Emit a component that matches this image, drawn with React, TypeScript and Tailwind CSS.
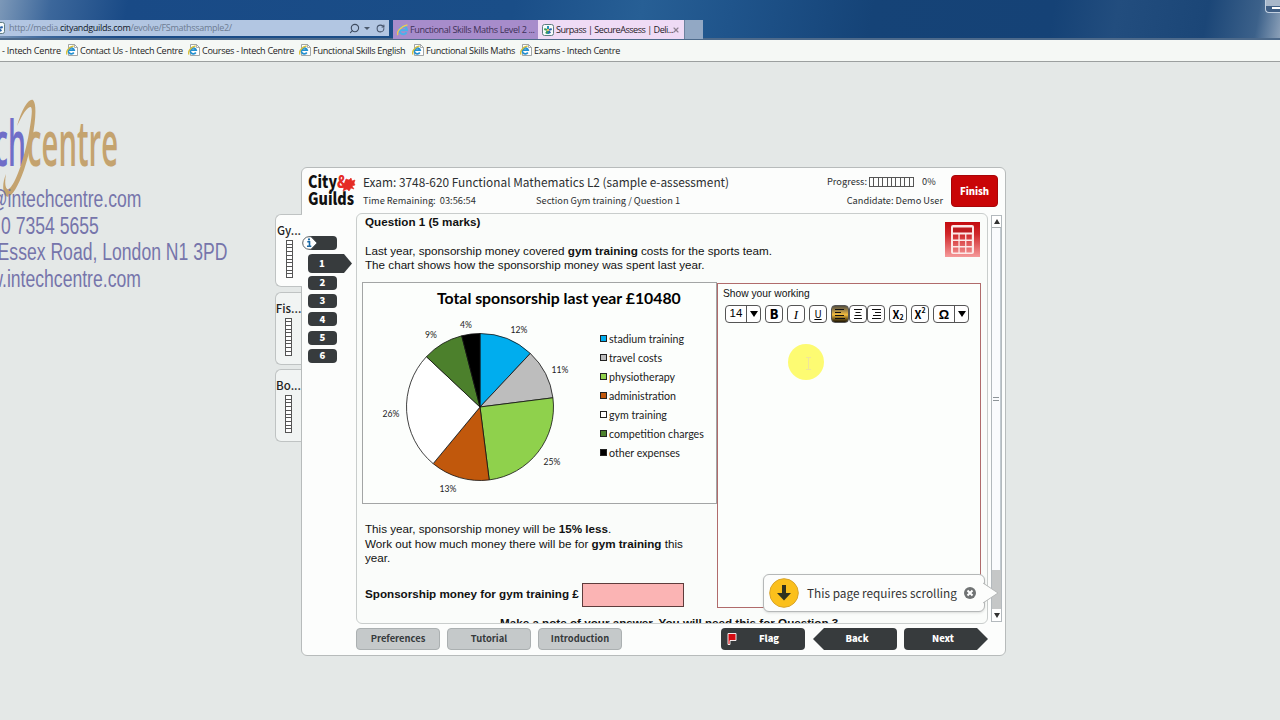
import type React from "react"
import { Search, RotateCw, X } from "lucide-react"

const UI = "font-['Noto_Sans_CJK_SC','Noto_Sans',sans-serif]"
const CHROME = "font-['Open_Sans','Noto_Sans',sans-serif]"
const BODY = "font-['Liberation_Sans',Arial,sans-serif]"
const CHART = "font-['Lato',sans-serif]"

const favourites = [
  { label: "Contact Us - Intech Centre", width: "w-[122px]" },
  { label: "Courses - Intech Centre", width: "w-[111px]" },
  { label: "Functional Skills English", width: "w-[113px]" },
  { label: "Functional Skills Maths", width: "w-[108px]" },
  { label: "Exams - Intech Centre", width: "w-[110px]" },
]

const slices = [
  { label: "stadium training", value: 12, color: "#00adee", x: 156, y: 50 },
  { label: "travel costs", value: 11, color: "#bdbdbd", x: 197, y: 90 },
  { label: "physiotherapy", value: 25, color: "#8fd14c", x: 189, y: 182 },
  { label: "administration", value: 13, color: "#c1580c", x: 85, y: 209 },
  { label: "gym training", value: 26, color: "#ffffff", x: 28, y: 134 },
  { label: "competition charges", value: 9, color: "#4c802c", x: 68, y: 55 },
  { label: "other expenses", value: 4, color: "#000000", x: 103, y: 45 },
]

const IePageIcon: React.FC = () => (
  <svg width="12" height="12" viewBox="0 0 12 12" className="shrink-0">
    <path d="M2.5.5h6l3 3v8h-9z" fill="#fff" stroke="#8a8f90" strokeWidth=".8" />
    <path d="M8.5.5v3h3" fill="none" stroke="#8a8f90" strokeWidth=".7" />
    <path d="M7.800 8.500a3 3 0 1 1 .4-2.300H2.800" fill="none" stroke="#2490d0" strokeWidth="1.700" />
    <path d="M1 10.500C-.5 8 2.500 2.800 7.600 2" fill="none" stroke="#d9c13c" strokeWidth="1.400" />
  </svg>
)

const SurpassIcon: React.FC = () => (
  <svg width="12" height="12" viewBox="0 0 12 12" className="shrink-0">
    <rect x=".5" y=".5" width="11" height="11" rx="2" fill="#f6fbfb" stroke="#5f7c80" />
    <path d="M6 2v3M6 7v3" stroke="#2793b5" strokeWidth="2" />
    <path d="M2.3 5l2.6.8M4 9.5l1.5-2.4" stroke="#3a9b54" strokeWidth="1.9" />
    <path d="M9.7 5l-2.6.8M8.2 9.3L6.9 7.2" stroke="#2a62a8" strokeWidth="1.9" />
    <circle cx="6" cy="6" r="1" fill="#e8b03a" />
  </svg>
)

const Browser: React.FC = () => (
  <header className={`${CHROME} shrink-0`}>
    <div className="flex h-10 items-start border-b-2 border-[#4d6a8b] bg-[linear-gradient(100deg,#7c98b8_0%,#3c679b_4%,#194a86_10%,#1a4e88_40%,#275f95_50%,#1f548b_57%,#154377_68%,#154276_82%,#224d7e_87%,#1b4677_94%,#3c618a_98%,#8ba0b8_100%)] pt-5">
      <div className="flex h-4 w-[389px] items-center bg-[#b2c6e2] pr-1">
        <div className="w-[5px] overflow-hidden">
          <div className="-ml-[7px]"><SurpassIcon /></div>
        </div>
        <span className="ml-1 whitespace-nowrap text-[9px] leading-4 tracking-[-0.3px] text-[#6d7c92]">
          http://media.<span className="text-[#10161f]">cityandguilds.com</span>/evolve/FSmathssample2/
        </span>
        <span className="grow" />
        <Search size={11} strokeWidth={2.4} className="-scale-x-100 text-[#3f4c60]" />
        <span className="ml-1 border-x-[3px] border-t-[3px] border-x-transparent border-t-[#4b596c]" />
        <RotateCw size={9} strokeWidth={2.8} className="ml-1.5 text-[#44536a]" />
      </div>
      <div className="ml-1 flex h-[19px] w-[145px] items-center bg-[#a78ccb] pl-1">
        <svg width="12" height="12" viewBox="0 0 12 12" className="shrink-0">
          <path d="M9.600 8.300a3.800 3.800 0 1 1 .5-2.100H3" fill="none" stroke="#4ab1ea" strokeWidth="2" />
          <path d="M1 11C-.8 8.500 3 2.500 10.500.9" fill="none" stroke="#ecc955" strokeWidth="1.400" />
        </svg>
        <span className="ml-px whitespace-nowrap text-[9.1px] tracking-[-0.37px] text-[#3d3057]">Functional Skills Maths Level 2 ...</span>
      </div>
      <div className="flex h-[19px] w-[146px] items-center bg-[#efdbf5] pl-1">
        <SurpassIcon />
        <span className="ml-[2px] w-[116px] whitespace-nowrap text-[9.1px] tracking-[-0.5px] text-[#262028]">Surpass | SecureAssess | Deli...</span>
        <X size={8} strokeWidth={3.5} className="shrink-0 text-[#8d8190]" />
      </div>
      <div className="h-[19px] w-[19px] border-l border-[#6d829e] bg-[#92a8c4]" />
      <span className="grow" />
      <div className="-mt-5 flex h-[13px] w-[15px] items-center justify-end rounded-bl border-b border-l border-[#c2d0e0] bg-linear-to-b from-[#a9b8ca] from-50% to-[#405f85] to-50%">
        <span className="mt-1 h-[2px] w-2 bg-white" />
      </div>
    </div>
    <nav className="flex h-[22px] items-center border-b border-[#9b9f9f] bg-[#f5f8f5] text-[9.1px] text-[#222]">
      <span className="w-[66px] whitespace-nowrap pl-[2px] tracking-[-0.25px]">- Intech Centre</span>
      {favourites.map((fav) => (
        <div key={fav.label} className={`flex items-center gap-[2px] ${fav.width}`}>
          <IePageIcon />
          <span className="whitespace-nowrap tracking-[-0.31px]">{fav.label}</span>
        </div>
      ))}
    </nav>
  </header>
)

const ContactDetails: React.FC = () => (
  <aside className="w-[275px] shrink-0 overflow-hidden pt-[36px]">
    <svg width="130" height="102" viewBox="0 0 130 102" className="block">
      <g fontFamily="'Open Sans', sans-serif" fontSize="64" fontWeight="600">
        <text x="-6" y="68" textLength="32" lengthAdjust="spacingAndGlyphs" fill="#706dc8">ch</text>
        <text x="27" y="68" textLength="91" lengthAdjust="spacingAndGlyphs" fill="#c4a36f">centre</text>
      </g>
      <path d="M17 28C22 10 29 0 33 2C39 8 33 45 24 72C17 92 9 103 5 97C2 92 3 83 6 76C4 87 6 94 10 90C17 83 25 57 29 35C32 18 33 8 30 9C25 11 21 20 17 28Z" fill="#c4a36f" />
    </svg>
    <div className={`${BODY} -mt-[14px] text-[23px] leading-[26.7px] text-[#7675ab]`}>
      <div className="flex w-[141px] justify-end"><span className="origin-right scale-x-[.765] whitespace-nowrap">@intechcentre.com</span></div>
      <div className="flex w-[99px] justify-end"><span className="origin-right scale-x-[.765] whitespace-nowrap">0 7354 5655</span></div>
      <div className="flex w-[227px] justify-end"><span className="origin-right scale-x-[.765] whitespace-nowrap">Essex Road, London N1 3PD</span></div>
      <div className="flex w-[141px] justify-end"><span className="origin-right scale-x-[.765] whitespace-nowrap">w.intechcentre.com</span></div>
    </div>
  </aside>
)

const SectionTab: React.FC<{ label: string; active?: boolean }> = ({ label, active }) => (
  <div className={`flex h-[73px] flex-col items-center rounded-l-md border border-r-0 border-[#bfc3c3] ${active ? "-mr-px bg-[#fcfdfc]" : "bg-[#f1f4f3]"}`}>
    <span className={`${UI} mt-[7px] text-[11.500px] font-medium leading-4 text-[#222]`}>{label}</span>
    <div className="mt-[2px] flex h-[38px] w-[7px] flex-col divide-y divide-[#555] border border-[#555] bg-white">
      {Array.from({ length: 10 }, (_, i) => (
        <span key={i} className="grow" />
      ))}
    </div>
  </div>
)

const QuestionNav: React.FC = () => (
  <div className={`${UI} w-[54px] shrink-0 pt-[23px] text-[9.5px] font-black leading-none text-white`}>
    <div className="relative ml-[6px] h-[14px] w-[29px] rounded bg-[#373b3d]">
      <svg width="16" height="14" viewBox="0 0 16 14" className="absolute -left-[6px] top-0">
        <path d="M7 .7h2L15 7l-6 6.3H7A6.3 6.3 0 0 1 7 .7z" fill="#fff" stroke="#596064" />
        <path d="M5.3 5.7H7.500V10.300M5 10.300h4.300" fill="none" stroke="#1768a5" strokeWidth="1.600" />
        <circle cx="7" cy="3.400" r="1.100" fill="#1768a5" />
      </svg>
    </div>
    <div className="relative ml-[6px] mt-1 flex h-[19px] w-11 items-center pl-[11px]">
      <svg width="44" height="19" viewBox="0 0 44 19" className="absolute left-0 top-0">
        <path d="M4 0h32l8 9.500-8 9.500H4a4 4 0 0 1-4-4V4a4 4 0 0 1 4-4z" fill="#373b3d" />
      </svg>
      <span className="relative">1</span>
    </div>
    <div className="ml-[6px] mt-[3px] flex flex-col gap-[4.2px]">
      {[2, 3, 4, 5, 6].map((n) => (
        <div key={n} className="flex h-[14px] w-[29px] items-center justify-center rounded bg-[#373b3d]">{n}</div>
      ))}
    </div>
  </div>
)

const ExamHeader: React.FC = () => (
  <div className={`${UI} flex h-[45px] shrink-0 text-[#2c2f31]`}>
    <svg width="54" height="45" viewBox="0 0 54 45" className="shrink-0">
      <g fontFamily="'Noto Sans CJK SC', sans-serif" fontWeight="900" fill="#111">
        <text x="6" y="20" fontSize="17" textLength="29" lengthAdjust="spacingAndGlyphs">City</text>
        <text x="6" y="37" fontSize="17" textLength="46" lengthAdjust="spacingAndGlyphs">Guilds</text>
        <text x="35" y="20" fontSize="17" textLength="11" lengthAdjust="spacingAndGlyphs" fill="#e52b25">&amp;</text>
      </g>
      <path d="M43 14l1-3 3 1 2-2 1 3 3-1-1 3 1 2-3 1 2 3-3-1-2 3-2-2-4 2 1-3-3-1 4-2z" fill="#e52b25" stroke="#e52b25" strokeWidth=".6" />
    </svg>
    <div className="flex w-[386px] flex-col pl-[7px]">
      <h1 className="mt-[5px] whitespace-nowrap text-[11.850px] leading-[18px]">Exam: 3748-620 Functional Mathematics L2 (sample e-assessment)</h1>
      <div className="flex whitespace-nowrap text-[9.250px] leading-[18px]">
        <span className="w-[173px] whitespace-pre">Time Remaining:  03:56:54</span>
        <span>Section Gym training / Question 1</span>
      </div>
    </div>
    <div className="flex w-[201px] flex-col items-end whitespace-nowrap text-[9.250px]">
      <div className="mt-[5px] flex h-[18px] w-[116px] items-center">
        <span className="w-[42px]">Progress:</span>
        <div className="flex h-[10px] w-[45px] divide-x divide-[#555] border border-[#555]">
          {Array.from({ length: 10 }, (_, i) => (
            <span key={i} className="grow" />
          ))}
        </div>
        <span className="ml-2">0%</span>
      </div>
      <span className="leading-[18px]">Candidate: Demo User</span>
    </div>
    <button className="ml-2 mt-[7px] h-8 w-[47px] rounded-[4px] border border-[#a80508] bg-[#c90507] text-[9.500px] font-black text-white">Finish</button>
  </div>
)

const point = (percent: number, r: number) => {
  const a = (percent / 100) * Math.PI * 2
  return `${(117 + r * Math.sin(a)).toFixed(2)} ${(124 - r * Math.cos(a)).toFixed(2)}`
}

const SponsorshipChart: React.FC = () => {
  let start = 0
  return (
    <div className={`${CHART} relative flex h-[222px] w-[355px] border border-[#a3a5a5] bg-[#fcfefc]`}>
      <svg width="237" height="220" viewBox="0 0 237 220" className="shrink-0">
        {slices.map((s) => {
          const from = start
          start += s.value
          return (
            <path
              key={s.label}
              d={`M117 124L${point(from, 73.5)}A73.5 73.5 0 0 1 ${point(start, 73.5)}Z`}
              fill={s.color}
              stroke="#111"
              strokeWidth=".8"
              strokeLinejoin="round"
            />
          )
        })}
        {slices.map((s) => (
          <text key={s.label} x={s.x} y={s.y} textAnchor="middle" fontSize="8.600" fill="#222">{s.value}%</text>
        ))}
      </svg>
      <h2 className="absolute left-[74px] top-[5px] whitespace-nowrap text-[15.800px] font-bold leading-5 text-black">Total sponsorship last year £10480</h2>
      <ul className="mt-[46px] text-[10.650px] leading-[19.050px] text-[#222]">
        {slices.map((s) => (
          <li key={s.label} className="flex items-center gap-[2px] whitespace-nowrap">
            <span className="h-[7px] w-[7px] border border-[#222]" style={{ backgroundColor: s.color }} />
            {s.label}
          </li>
        ))}
      </ul>
    </div>
  )
}

const ToolButton: React.FC<{ className?: string; children: React.ReactNode }> = ({ className = "bg-white", children }) => (
  <button className={`flex h-[18px] w-[18px] shrink-0 items-center justify-center rounded border border-[#555] text-black ${className}`}>{children}</button>
)

const DropDown: React.FC<{ children: React.ReactNode }> = ({ children }) => (
  <div className="flex h-[18px] w-9 shrink-0 items-center rounded border border-[#555] bg-white text-black">
    <span className="flex h-full w-[21px] items-center justify-center border-r border-[#555]">{children}</span>
    <span className="ml-[3px] border-x-4 border-t-[6px] border-x-transparent border-t-black" />
  </div>
)

const AlignIcon: React.FC<{ d: string }> = ({ d }) => (
  <svg width="12" height="12" viewBox="0 0 12 12">
    <path d={d} stroke="#111" strokeWidth="1.2" />
  </svg>
)

const WorkingEditor: React.FC = () => (
  <div className="relative h-[325px] w-[264px] shrink-0 border border-[#b06b6b] bg-[#fcfefc]">
    <div className="pl-[5px] pt-1 text-[10.250px] leading-3 text-[#111]">Show your working</div>
    <div className={`${UI} mt-[5px] flex pl-[7px] leading-none`}>
      <DropDown><span className={`${BODY} text-[11.5px]`}>14</span></DropDown>
      <ToolButton className="ml-1 bg-white text-[12.500px] font-black">B</ToolButton>
      <ToolButton className="ml-1 bg-white font-['Liberation_Serif',serif] text-[13px] italic">I</ToolButton>
      <ToolButton className="ml-1 bg-white text-[10px] underline">U</ToolButton>
      <ToolButton className="ml-1 bg-linear-to-b from-[#55503f] via-[#f4bd3c] via-55% to-[#1f1704]"><AlignIcon d="M1 1.500h9M1 4.500h6M1 7.500h9M1 10.500h10" /></ToolButton>
      <ToolButton><AlignIcon d="M2 1.500h8M3.500 4.500h5M2.500 7.500h7M2 10.500h8" /></ToolButton>
      <ToolButton><AlignIcon d="M2 1.500h9M5 4.500h6M3 7.500h8M2 10.500h9" /></ToolButton>
      <ToolButton className="ml-1 bg-white text-[11px] font-bold">X<span className="mt-[6px] text-[7px]">2</span></ToolButton>
      <ToolButton className="ml-1 bg-white text-[11px] font-bold">X<span className="mb-[7px] text-[7px]">2</span></ToolButton>
      <span className="ml-1"><DropDown><b className="font-['Liberation_Sans',sans-serif] text-[13px]">Ω</b></DropDown></span>
    </div>
    <span className="absolute left-[70px] top-[60px] h-9 w-9 rounded-full bg-[#fdfb72]" />
    <svg width="7" height="13" viewBox="0 0 7 13" className="absolute left-[87px] top-[73px]">
      <path d="M1 .5h5M3.500 .5v12M1 12.500h5" fill="none" stroke="#f0e59a" />
    </svg>
  </div>
)

const CalculatorIcon: React.FC = () => (
  <svg width="35" height="35" viewBox="0 0 35 35">
    <defs>
      <linearGradient id="calc" x2="0" y2="35" gradientUnits="userSpaceOnUse">
        <stop offset="0" stopColor="#c40a0e" />
        <stop offset=".35" stopColor="#d0282b" />
        <stop offset="1" stopColor="#f59a9a" />
      </linearGradient>
    </defs>
    <path d="M0 0h35v35H0z" fill="url(#calc)" />
    <rect x="6" y="3" width="23" height="29" rx="2" fill="#fce9e8" />
    <path d="M8 5.500h19v5H8z" fill="#bd1c20" />
    {[12.5, 19, 25.5].map((y) => [8, 14.7, 21.4].map((x) => (
      <rect key={`${x}-${y}`} x={x} y={y} width="5.4" height="5" fill="url(#calc)" />
    )))}
  </svg>
)

const QuestionPanel: React.FC = () => (
  <div className={`${BODY} h-[411px] w-[632px] shrink-0 overflow-hidden rounded-md border border-[#c9cdcc] bg-[#fafcfa] pl-[5px] text-[11.67px] leading-[14.5px] text-[#111]`}>
    <div className="flex h-[69px] justify-between">
      <div className="whitespace-nowrap pl-[3px]">
        <h3 className="mt-px font-bold">Question 1 (5 marks)</h3>
        <p className="mt-[14px]">
          Last year, sponsorship money covered <b>gym training</b> costs for the sports team.
          <br />
          The chart shows how the sponsorship money was spent last year.
        </p>
      </div>
      <div className="mr-[7px] mt-[8px]"><CalculatorIcon /></div>
    </div>
    <div className="flex h-[333px]">
      <div className="-mt-px w-[355px] shrink-0">
        <SponsorshipChart />
        <p className="mt-[18px] pl-[3px]">
          This year, sponsorship money will be <b>15% less</b>.
          <br />
          Work out how much money there will be for <b>gym training</b> this
          <br />
          year.
        </p>
        <div className="mt-[17px] flex items-center pl-[3px]">
          <b className="w-[217px] whitespace-nowrap">Sponsorship money for gym training £</b>
          <div className="h-6 w-[102px] border border-[#5e3c3c] bg-[#fbb4b4]" />
        </div>
      </div>
      <WorkingEditor />
    </div>
    <p className="ml-[138px] whitespace-nowrap font-bold">Make a note of your answer. You will need this for Question 3</p>
  </div>
)

const ScrollBar: React.FC = () => (
  <div className="ml-[3px] mt-[2px] flex h-[407px] w-[11px] flex-col border border-[#b3b9bd] bg-[#c5c7c7]">
    <span className="flex h-3 items-center justify-center border-b border-[#a9aeb0] bg-white">
      <i className="border-x-[3px] border-b-[5px] border-x-transparent border-b-[#333]" />
    </span>
    <span className="flex h-[342px] items-center justify-center border-r border-[#c1c9cf] bg-[#fafbfd]">
      <i className="h-[4px] w-[6px] border-y border-[#8d9498]" />
    </span>
    <span className="grow" />
    <span className="flex h-3 items-center justify-center bg-white">
      <i className="border-x-[3px] border-t-[5px] border-x-transparent border-t-[#333]" />
    </span>
  </div>
)

const ScrollHint: React.FC = () => (
  <div className={`${UI} absolute left-[461px] top-[406px] flex h-[38px] w-[222px] items-center rounded-md border border-[#b5b8b8] bg-[#fcfdfc] pl-[5px] text-[#333] shadow-sm`}>
    <svg width="30" height="30" viewBox="0 0 30 30" className="shrink-0">
      <circle cx="15" cy="15" r="14.300" fill="#fbc01c" stroke="#d8a42c" />
      <path d="M13 7h4v8h5l-7 7.500L8 15h5z" fill="#30321f" />
    </svg>
    <span className="ml-2 w-[157px] whitespace-nowrap text-[11.800px] leading-5">This page requires scrolling</span>
    <svg width="12" height="12" viewBox="0 0 12 12" className="shrink-0">
      <circle cx="6" cy="6" r="6" fill="#707374" />
      <path d="M3.500 3.500l5 5m0-5l-5 5" stroke="#fff" strokeWidth="2" />
    </svg>
    <svg width="16" height="22" viewBox="0 0 16 22" className="absolute -right-[15px] top-[7px]">
      <path d="M0 1l15 10L0 21" fill="#fcfdfc" stroke="#b5b8b8" />
    </svg>
  </div>
)

const Footer: React.FC = () => (
  <div className={`${UI} mt-1 flex h-[23px] pl-[54px] text-[9.400px] font-black leading-none text-white`}>
    <div className="flex gap-[7px] font-bold text-[#363a3c]">
      {["Preferences", "Tutorial", "Introduction"].map((label) => (
        <button key={label} className="h-[22px] w-[84px] rounded border border-[#abb0b1] bg-[#c5c9ca]">{label}</button>
      ))}
    </div>
    <button className="relative ml-[99px] h-[22px] w-[84px] rounded bg-[#373b3d] pl-3">
      <svg width="10" height="12" viewBox="0 0 10 12" className="absolute left-[6px] top-[5px]">
        <path d="M1 .5h8v7H3v4H1z" fill="#d50b12" stroke="#fff" strokeWidth=".9" />
      </svg>
      Flag
    </button>
    <button className="relative ml-2 h-[22px] w-[84px] pl-1">
      <svg width="84" height="22" viewBox="0 0 84 22" className="absolute left-0 top-0">
        <path d="M11 0h69a4 4 0 0 1 4 4v14a4 4 0 0 1-4 4H11L0 11z" fill="#373b3d" />
      </svg>
      <span className="relative">Back</span>
    </button>
    <button className="relative ml-[7px] h-[22px] w-[84px] pr-[6px]">
      <svg width="84" height="22" viewBox="0 0 84 22" className="absolute left-0 top-0">
        <path d="M4 0h69l11 11-11 11H4a4 4 0 0 1-4-4V4a4 4 0 0 1 4-4z" fill="#373b3d" />
      </svg>
      <span className="relative">Next</span>
    </button>
  </div>
)

export default function App() {
  return (
    <div className="flex h-[720px] w-[1280px] flex-col overflow-hidden bg-[#e4e8e7]">
      <Browser />
      <main className="flex">
        <ContactDetails />
        <div className="z-10 mt-[152px] flex w-[26px] shrink-0 flex-col gap-[4.5px]">
          <SectionTab label="Gy..." active />
          <SectionTab label="Fis..." />
          <SectionTab label="Bo..." />
        </div>
        <section className="relative mt-[105px] flex h-[489px] w-[705px] shrink-0 flex-col rounded-md border border-[#b7bbbb] bg-[#fcfdfc]">
          <ExamHeader />
          <div className="flex">
            <QuestionNav />
            <QuestionPanel />
            <ScrollBar />
          </div>
          <Footer />
          <ScrollHint />
        </section>
      </main>
    </div>
  )
}
